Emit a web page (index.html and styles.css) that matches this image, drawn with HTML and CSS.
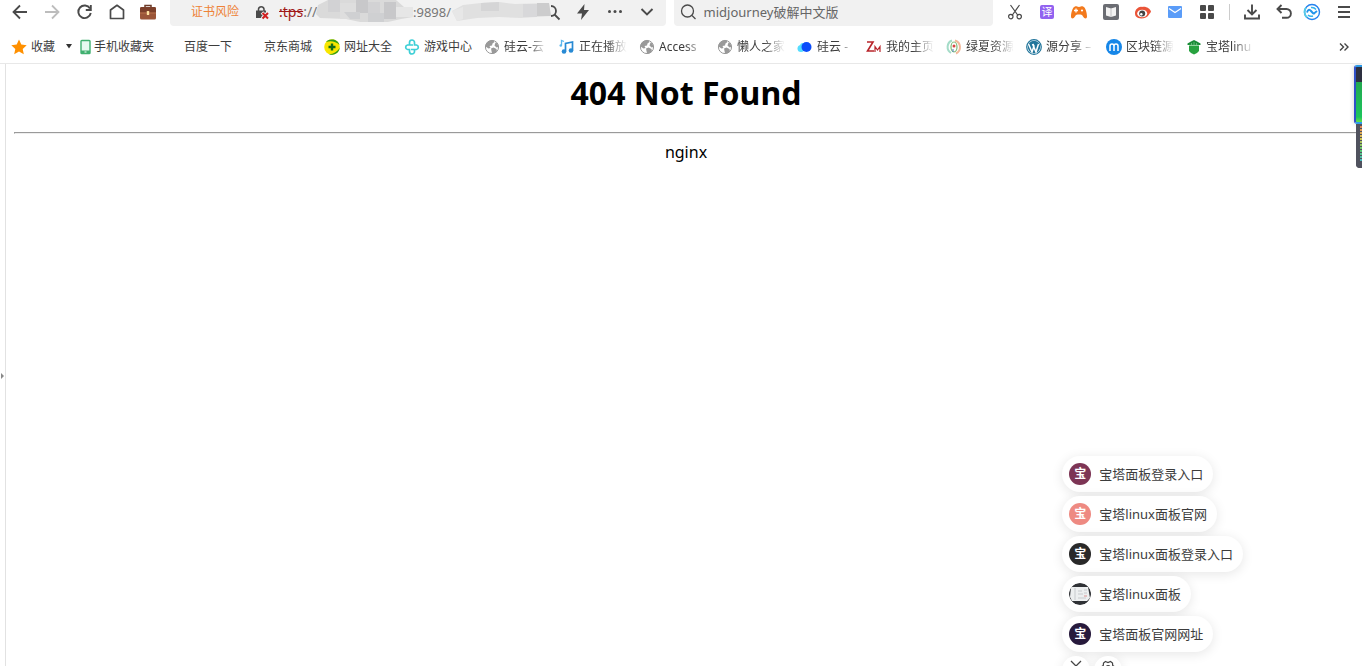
FILE: index.html
```
<!DOCTYPE html>
<html lang="zh-CN">
<head>
<meta charset="utf-8">
<title>404 Not Found</title>
<link rel="stylesheet" href="styles.css">
</head>
<body>
<svg class="defs" width="0" height="0" aria-hidden="true">
  <symbol id="globe" viewBox="0 0 16 16">
    <circle cx="8" cy="8" r="6.600" fill="#fff" stroke="#999" stroke-width="1"/>
    <path d="M3 3.500C5 1.600 8 1 9.500 1.500L10.500 3 8.500 4.500 8 6.500 5.500 7 6.500 9 4.500 9.500 1.500 7.500C1.600 6 2 4.500 3 3.500Z" fill="#999"/>
    <path d="M7 9.500L9.500 8.500 12.500 10 13 12.500C11.500 14 9.500 14.700 8 14.500L7.500 12Z" fill="#999"/>
    <path d="M11.500 3.500L13.500 4.500 14.500 8 12.500 8.500 10.500 6.500Z" fill="#999"/>
  </symbol>
</svg>

<header class="chrome">
  <div class="toolbar">
    <nav class="nav" aria-label="导航">
      <button class="tool" aria-label="后退"><svg width="18" height="18" viewBox="0 0 18 18" fill="none" stroke="#4a4a4a" stroke-width="1.800"><path d="M16 9H3M9 2.500L2.500 9 9 15.500"/></svg></button>
      <button class="tool" aria-label="前进"><svg width="18" height="18" viewBox="0 0 18 18" fill="none" stroke="#bdbdbd" stroke-width="1.800"><path d="M2 9H15M9 2.500L15.500 9 9 15.500"/></svg></button>
      <button class="tool" aria-label="刷新"><svg width="18" height="18" viewBox="0 0 18 18" fill="none" stroke="#4a4a4a" stroke-width="1.900"><path d="M15 5.500A6.300 6.300 0 1 0 15.800 10"/><path d="M15.800 2V7H10.800"/></svg></button>
      <button class="tool" aria-label="主页"><svg width="18" height="18" viewBox="0 0 18 18" fill="none" stroke="#4a4a4a" stroke-width="1.700" stroke-linejoin="round"><path d="M3.500 15.500V7L10 2.300 16.500 7V15.500Z"/></svg></button>
      <button class="tool" aria-label="工具箱"><svg width="18" height="18" viewBox="0 0 18 18"><path d="M6 4.500V2.500H12V4.500" fill="none" stroke="#6d3b28" stroke-width="1.500"/><rect x="1" y="4" width="16" height="12.500" rx="1.500" fill="#9b5538"/><path d="M1 5.500Q1 4 2.500 4H15.500Q17 4 17 5.500V9.500H1Z" fill="#7c3f2a"/><path d="M1 10H17" stroke="#c07a50" stroke-width=".8"/><rect x="7.800" y="8" width="2.400" height="4" rx=".6" fill="#ffe2a0"/></svg></button>
    </nav>

    <div class="address">
      <span class="risk">证书风险</span>
      <svg width="16" height="16" viewBox="0 0 16 16"><path d="M4.500 7V5A2.800 2.800 0 0 1 10 5V7" fill="none" stroke="#4a4a4a" stroke-width="1.500"/><path d="M2 6.500H12V14H2Z" fill="#4a4a4a"/><path d="M8 8.500L14 14.500M14 8.500L8 14.500" stroke="#f1f1f1" stroke-width="3.500"/><path d="M8.500 9L14 14.500M14 9L8.500 14.500" stroke="#d02020" stroke-width="2"/></svg>
      <span class="url"><s>:tps</s>://</span>
      <svg class="mosaic" width="97" height="26" viewBox="0 0 97 26"><path d="M2 6L12 1H80L88 8 97 10V18L85 20 72 23H44L30 20 4 19 0 15Z" fill="#dadada"/><path d="M12 1H24V13H12ZM52 3H64V14H52Z" fill="#d2d2d4"/><path d="M40 1H52V14H40ZM68 3H80V20H68Z" fill="#c8c8ca"/><path d="M24 4H40V20H24Z" fill="#dedede"/><path d="M28 13H44V20H34ZM52 14H68V23H52Z" fill="#cfd0d2"/><path d="M80 8H97V18H80Z" fill="#e6e6e6"/></svg>
      <span class="url port">:9898/</span>
      <svg class="mosaic" width="100" height="26" viewBox="0 0 100 26"><path d="M1 12L12 6 30 4 48 3 64 5 98 4 100 17 70 19 48 18 26 19 6 22Z" fill="#e0e0e0"/><path d="M30 4L48 3V12H30Z" fill="#d5d5d6"/><path d="M72 5H86V18H72Z" fill="#d8d8da"/><path d="M86 4H98L100 17H86Z" fill="#cccccd"/><path d="M1 12L12 8V20L6 22Z" fill="#e7e7e7"/></svg>
      <button class="zoom" aria-label="查找"><svg width="10" height="18" viewBox="8 0 10 18" fill="none" stroke="#4a4a4a" stroke-width="1.800"><circle cx="8" cy="8" r="5"/><path d="M11.500 11.500L16.500 16.500"/></svg></button>
      <button class="tool" aria-label="极速模式"><svg width="16" height="18" viewBox="0 0 16 18"><path d="M9.500 1L2 10.500H7L6 17 14 7H9Z" fill="#4a4a4a"/></svg></button>
      <button class="tool" aria-label="更多"><svg width="16" height="16" viewBox="0 0 16 16" fill="#4a4a4a"><circle cx="2.500" cy="7.500" r="1.500"/><circle cx="8" cy="7.500" r="1.500"/><circle cx="13.500" cy="7.500" r="1.500"/></svg></button>
      <button class="tool" aria-label="展开"><svg width="16" height="16" viewBox="0 0 16 16" fill="none" stroke="#4a4a4a" stroke-width="1.900"><path d="M2.500 5L8 10.500 13.500 5"/></svg></button>
    </div>

    <label class="search">
      <svg width="18" height="18" viewBox="0 0 18 18" fill="none" stroke="#4a4a4a" stroke-width="1.300"><circle cx="8.500" cy="8" r="6"/><path d="M13 12.500L16.500 16"/></svg>
      <input type="text" value="midjourney破解中文版" aria-label="搜索">
    </label>

    <div class="extras">
      <button class="tool" aria-label="截图"><svg width="16" height="16" viewBox="0 0 16 16" fill="none" stroke="#4a4a4a" stroke-width="1.200"><path d="M3.500 1L11 11.500M12.500 1L5 11.500"/><circle cx="3.800" cy="12.600" r="2.200"/><circle cx="12.200" cy="12.600" r="2.200"/></svg></button>
      <button class="tool" aria-label="翻译"><span class="translate">译</span></button>
      <button class="tool" aria-label="游戏"><svg width="18" height="16" viewBox="0 0 18 16"><path d="M5 2.500C6.500 2 7 3 9 3S11.500 2 13 2.500C15.500 3 17 9 17 12.500 17 15 14.500 15 13 12.500 12 10.500 11 10.500 9 10.500S6 10.500 5 12.500C3.500 15 1 15 1 12.500 1 9 2.500 3 5 2.500Z" fill="#f37a1d"/><path d="M4 6.500H8M6 4.500V8.500" stroke="#fff" stroke-width="1.300"/><circle cx="12" cy="6.500" r="1.100" fill="#fff"/></svg></button>
      <button class="tool" aria-label="阅读"><svg width="16" height="16" viewBox="0 0 16 16"><rect width="16" height="16" rx="2" fill="#6b6d73"/><path d="M3 3L8 4.500 13 3V11.500L8 13 3 11.500Z" fill="#f3f3f3"/><path d="M8 4.500V13" stroke="#b5b6b9" stroke-width=".8"/></svg></button>
      <button class="tool" aria-label="微博"><svg width="18" height="16" viewBox="0 0 18 16"><path d="M1 9C1 5.500 5 2 8 3 12 2 16 4.500 17 7.500 16.500 9 15.500 9.500 15 10.500 13 15 4.500 15.500 2 12.500 1.200 11.500 1 10 1 9Z" fill="#ea5438"/><ellipse cx="8.200" cy="9.500" rx="5" ry="3.800" fill="#fff"/><circle cx="8.200" cy="9.600" r="3" fill="#444"/><circle cx="7.300" cy="10.300" r="1.200" fill="#fff"/></svg></button>
      <button class="tool" aria-label="邮件"><svg width="16" height="14" viewBox="0 0 16 14"><rect x="1" y="1" width="14" height="12" rx="1" fill="#5a9cf8"/><path d="M2 3.500L8 7.500 14 3.500" fill="none" stroke="#fff" stroke-width="1.200"/></svg></button>
      <button class="tool" aria-label="应用"><svg width="16" height="16" viewBox="0 0 16 16" fill="#4a4a4a"><rect x="1" y="1" width="6" height="6" rx="1"/><rect x="9" y="1" width="6" height="6" rx="1"/><rect x="1" y="9" width="6" height="6" rx="1"/><rect x="9" y="9" width="6" height="6" rx="1"/></svg></button>
      <span class="divider"></span>
      <button class="tool" aria-label="下载"><svg width="18" height="18" viewBox="0 0 18 18" fill="none" stroke="#4a4a4a" stroke-width="1.900"><path d="M9 1.500V11M4.500 7L9 11.500 13.500 7M2 11.500V15.500H16V11.500"/></svg></button>
      <button class="tool" aria-label="恢复"><svg width="18" height="18" viewBox="0 0 18 18" fill="none" stroke="#4a4a4a" stroke-width="1.900"><path d="M3 6H11.500A4.300 4.300 0 0 1 11.500 14.800H7M6.500 2L2.500 6 6.500 10"/></svg></button>
      <button class="tool avatar" aria-label="账号"><svg width="18" height="18" viewBox="0 0 18 18" fill="none"><circle cx="9" cy="9" r="7.500" stroke="#2582ee" stroke-width="1.400"/><path d="M4 14.500A7.500 7.500 0 0 1 3 4.500" stroke="#55cbe8" stroke-width="1.800"/><path d="M4 9.500Q5.500 5 8 8T11 10.500 14 8" stroke="#2494ea" stroke-width="2"/><path d="M8 4.500Q11 4 13 6.500M5 12Q7 14 10 13" stroke="#31b3ed" stroke-width="1.500"/></svg></button>
      <button class="tool" aria-label="菜单"><svg width="16" height="16" viewBox="0 0 16 16" stroke="#4a4a4a" stroke-width="1.800"><path d="M2 3H14M2 8H14M2 13H14"/></svg></button>
    </div>
  </div>

  <nav class="bookmarks" aria-label="书签">
    <a class="mark" href="#"><svg width="16" height="16" viewBox="0 0 16 16"><path d="M8 .5L10.300 5.600 15.700 6.200 11.700 9.900 12.800 15.300 8 12.600 3.200 15.300 4.300 9.900 .3 6.200 5.700 5.600Z" fill="#ff9000"/></svg><span>收藏</span></a>
    <button class="caret" aria-label="收藏菜单"><svg width="8" height="5" viewBox="0 0 8 5"><path d="M1 0H7L4 4.500Z" fill="#333"/></svg></button>
    <a class="mark phone" href="#"><svg width="11" height="16" viewBox="0 0 11 16"><rect x="1" y="1.500" width="9" height="13" rx=".8" fill="#e7faf0" stroke="#40b070" stroke-width="1.400"/><path d="M1 11.500H10V14.500H1Z" fill="#40b070"/><path d="M4.500 13H6.500" stroke="#fff"/></svg><span>手机收藏夹</span></a>
    <a class="mark" href="#"><i class="blank"></i><span>百度一下</span></a>
    <a class="mark" href="#"><i class="blank"></i><span>京东商城</span></a>
    <a class="mark" href="#"><svg width="16" height="16" viewBox="0 0 16 16"><circle cx="8" cy="8" r="7.800" fill="#f8e600"/><path d="M2 3A8 8 0 0 1 15.500 6C12 2.500 7 1.500 2 3ZM15.800 8.500A8 8 0 0 1 5 15.300C10 15 13.500 12.500 15.800 8.500Z" fill="#2c9b1c"/><path d="M8 4.500V11.500M4.500 8H11.500" stroke="#136b18" stroke-width="2.400"/></svg><span>网址大全</span></a>
    <a class="mark" href="#"><svg width="16" height="16" viewBox="0 0 16 16" fill="none" stroke="#3dcfd6" stroke-width="1.700"><path d="M5.500 6V3.500A2.500 2.500 0 0 1 10.500 3.500V6H12.500A2.300 2.300 0 0 1 12.500 10.500H7M10.500 10V12.500A2.500 2.500 0 0 1 5.500 12.500V10.500H3.500A2.300 2.300 0 0 1 3.500 6H9"/></svg><span>游戏中心</span></a>
    <a class="mark w43" href="#"><svg width="16" height="16"><use href="#globe"/></svg><span class="fade">硅云-云</span></a>
    <a class="mark" href="#"><svg width="16" height="16" viewBox="0 0 16 16"><path d="M6.500 12.500V4.500L13.500 3V11.500" fill="none" stroke="#288ad4" stroke-width="1.700"/><circle cx="5" cy="12.500" r="2.300" fill="#288ad4"/><circle cx="12" cy="11.500" r="2.300" fill="#288ad4"/><path d="M2.500 6V1.500L5 2.500" fill="none" stroke="#5bb6ed" stroke-width="1.300"/><circle cx="1.800" cy="6.500" r="1.300" fill="#5bb6ed"/></svg><span class="fade">正在播放</span></a>
    <a class="mark w46" href="#"><svg width="16" height="16"><use href="#globe"/></svg><span class="fade">Access</span></a>
    <a class="mark" href="#"><svg width="16" height="16"><use href="#globe"/></svg><span class="fade">懒人之家</span></a>
    <a class="mark w37" href="#"><svg width="16" height="16" viewBox="0 0 16 16"><circle cx="4" cy="9.500" r="3.500" fill="#55ddff"/><circle cx="6" cy="7" r="3" fill="#55ddff"/><circle cx="9.500" cy="8" r="5" fill="#0b4dfa"/></svg><span class="fade">硅云 -</span></a>
    <a class="mark" href="#"><svg width="16" height="16" viewBox="0 0 16 16" fill="none" stroke="#b8242a"><path d="M1 3H7L1.500 12H8" stroke-width="1.600"/><path d="M9 13V7.500L11.500 11 14 7.500V13" stroke-width="1.200"/></svg><span class="fade">我的主页</span></a>
    <a class="mark" href="#"><svg width="16" height="16" viewBox="0 0 16 16" fill="none"><path d="M6 1.500A7 7 0 0 0 5 14" stroke="#a5dcc8" stroke-width="2"/><path d="M9 1.500A7 7 0 0 1 10 14.500" stroke="#f2b99b" stroke-width="2"/><ellipse cx="8" cy="8" rx="3" ry="5" stroke="#7fbc78" stroke-width="1.200"/><circle cx="8" cy="7" r="1.500" fill="#d84840"/><path d="M7 10V13" stroke="#5078b8"/></svg><span class="fade">绿夏资源</span></a>
    <a class="mark" href="#"><svg width="16" height="16" viewBox="0 0 16 16" fill="none"><circle cx="8" cy="8" r="7.300" fill="#fff" stroke="#21759b" stroke-width="1.200"/><circle cx="8" cy="8" r="6.200" fill="#21759b"/><path d="M2.500 5L6 13 8 7 7 5M6.500 5L10 13 12.500 5" stroke="#fff" stroke-width="1.500"/></svg><span class="fade">源分享 –</span></a>
    <a class="mark" href="#"><svg width="16" height="16" viewBox="0 0 16 16" fill="none"><circle cx="8" cy="8" r="8" fill="#1686e8"/><path d="M4 12V7Q4 5 6 5T8 7V12M8 7Q8 5 10 5T12 7V12" stroke="#fff" stroke-width="1.500"/></svg><span class="fade">区块链源</span></a>
    <a class="mark" href="#"><svg width="16" height="16" viewBox="0 0 16 16"><path d="M1.500 4.500L5 2.500 8 1 11 2.500 14.500 4.500V6H1.500Z" fill="#198b37"/><path d="M3 6.500H13V12Q11.500 14 8 15.500 4.500 14 3 12Z" fill="#27a23f"/><path d="M3 6.300H13M5.500 4V6M8 3V6M10.500 4V6" stroke="#8ed89c" stroke-width=".6"/></svg><span class="fade">宝塔linu</span></a>
    <button class="tool more" aria-label="更多书签"><svg width="10" height="10" viewBox="0 0 10 10" fill="none" stroke="#444" stroke-width="1.400"><path d="M1 1.500L4.500 5 1 8.500M5.500 1.500L9 5 5.500 8.500"/></svg></button>
  </nav>
</header>

<div class="view">
  <aside class="rail"><button class="expand" aria-label="展开侧栏"><svg width="5" height="6" viewBox="0 0 5 6"><path d="M1 0L4 3 1 6Z" fill="#888"/></svg></button></aside>
  <main class="page">
    <h1>404 Not Found</h1>
    <hr>
    <p>nginx</p>
  </main>

  <div class="gauge"><div class="level"></div><div class="bars"></div></div>

  <aside class="suggest">
    <a class="pill" href="#"><b class="badge plum">宝</b>宝塔面板登录入口</a>
    <a class="pill" href="#"><b class="badge coral">宝</b>宝塔linux面板官网</a>
    <a class="pill" href="#"><b class="badge black">宝</b>宝塔linux面板登录入口</a>
    <a class="pill" href="#"><svg class="badge" width="22" height="22" viewBox="0 0 22 22"><circle cx="11" cy="11" r="11" fill="#303236"/><path d="M2 4H19L21 15 18 18H3L1 14Z" fill="#edeff0"/><path d="M6 5V17M9 8H13M9 11H14M15 7H18M15 10H18M9 15H17" stroke="#c7cacd"/><path d="M15 13H18" stroke="#db9292"/></svg>宝塔linux面板</a>
    <a class="pill" href="#"><b class="badge night">宝</b>宝塔面板官网网址</a>
    <div class="actions">
      <button class="round" aria-label="关闭"><svg width="14" height="14" viewBox="0 0 14 14" fill="none" stroke="#444" stroke-width="1.300"><path d="M2 1L12 11M12 1L2 11"/></svg></button>
      <button class="round" aria-label="设置"><svg width="16" height="16" viewBox="0 0 16 16" fill="none" stroke="#444" stroke-width="1.200"><path d="M5.500 1.500L8 2.500 10.500 1.500 12.500 3 12.700 5.500 15 7 14.500 9.500 12.500 11 12 13.500 9.500 14.500 8 13 6.500 14.500 4 13.500 3.500 11 1.500 9.500 1 7 3.300 5.500 3.500 3Z"/><circle cx="8" cy="8" r="2.300"/></svg></button>
    </div>
  </aside>
</div>
</body>
</html>
```
FILE: styles.css
```
* { box-sizing: border-box; }

body {
  margin: 0;
  height: 100vh;
  display: flex;
  flex-direction: column;
  overflow: hidden;
  background: #fff;
  color: #3c3c3c;
  font: 12px/16px "Noto Sans", "Noto Sans CJK SC", sans-serif;
}

svg { display: block; flex: none; }
.defs { position: absolute; }
a { color: inherit; text-decoration: none; }
button { padding: 0; border: 0; background: none; font: inherit; color: inherit; }

.chrome { flex: none; border-bottom: 1px solid #e8e8e8; }

.toolbar { display: flex; height: 26px; padding: 0 2px 0 4px; }
.nav, .extras { display: flex; align-items: center; height: 24px; flex: none; }
.nav { margin-right: 6px; }
.extras { margin-left: 6px; }
.tool { display: flex; flex: none; align-items: center; justify-content: center; width: 32px; height: 24px; }
.avatar { width: 24px; margin-right: 4px; }
.divider { width: 1px; height: 16px; margin: 0 6px; background: #ccc; }
.translate { width: 14px; height: 14px; border-radius: 2px; background: #9262f0; color: #fff; font-size: 11px; line-height: 14px; }

.address, .search {
  display: flex;
  align-items: center;
  min-width: 0;
  height: 26px;
  padding-bottom: 2px;
  border-radius: 0 0 4px 4px;
  background: #f1f1f1;
}
.address { flex: 3 1 0; padding-left: 21px; padding-right: 3px; }
.risk { margin-right: 15px; color: #ee8236; white-space: nowrap; }
.url { margin-left: 9px; width: 37px; color: #777; font-size: 14px; line-height: 20px; white-space: nowrap; }
.url s { color: #a01818; }
.port { margin-left: 0; width: 38px; font-size: 13px; }
.mosaic { height: 26px; }
.zoom { width: 15px; margin-right: auto; }

.search { flex: 2 1 0; gap: 7px; margin-left: 8px; padding-left: 5px; }
.search input {
  flex: 1;
  min-width: 0;
  padding: 0;
  border: 0;
  outline: 0;
  background: none;
  color: #666;
  font: inherit;
  font-size: 13px;
}

.bookmarks { display: flex; align-items: center; gap: 12px; height: 37px; padding: 4px 2px 0 11px; }
.mark { display: flex; flex: none; align-items: center; gap: 4px; white-space: nowrap; }
.caret { margin: 0 -5px 0 -2px; }
.phone { gap: 3px; margin-right: -2px; }
.blank { width: 16px; height: 16px; }
.fade {
  width: 48px;
  overflow: hidden;
  -webkit-mask-image: linear-gradient(to right, #000 55%, transparent);
  mask-image: linear-gradient(to right, #000 55%, transparent);
}
.w43 .fade { width: 43px; }
.w46 .fade { width: 46px; }
.w37 .fade { width: 37px; }
.more { margin-left: auto; }

.view { position: relative; display: flex; flex: 1; min-height: 0; overflow: hidden; }
.rail { display: flex; align-items: center; width: 6px; border-right: 1px solid #e2e2e2; }
.expand { margin-top: 22px; }

.page { flex: 1; padding: 7px 4px 8px 8px; color: #000; font-size: 16px; line-height: 22px; text-align: center; font-family: "Noto Sans", sans-serif; }
.page h1 { margin: 0 0 18px; font-size: 32px; line-height: 43px; }
.page hr { margin: 0 0 7px; }
.page p { margin: 0; }

.gauge { position: absolute; top: 1px; right: 0; width: 8px; }
.level {
  height: 59px;
  border: 2px solid #2f50c8;
  border-top-color: #2c9be8;
  border-bottom-color: #2c9be8;
  border-right: 0;
  border-radius: 3px 0 0 3px;
  background: linear-gradient(#2d3040 0 15px, #22a850 15px, #1cc45c 50px, #62e04c);
  box-shadow: 0 0 5px rgba(0, 0, 0, .2);
}
.bars {
  height: 44px;
  margin-left: 2px;
  border: solid #50525e;
  border-width: 2px 0 6px 4px;
  border-radius: 0 0 0 4px;
  background:
    repeating-linear-gradient(transparent 0 2px, #50525e 2px 3px),
    linear-gradient(#e08055, #d8c452, #58c870, #48b8c8);
}

.suggest {
  position: absolute;
  right: 119px;
  bottom: -18px;
  display: flex;
  flex-direction: column;
  align-items: flex-start;
  gap: 4px;
}
.pill {
  display: flex;
  align-items: center;
  gap: 8px;
  height: 36px;
  padding: 0 10px 0 7px;
  border-radius: 18px;
  background: #fff;
  box-shadow: 0 2px 12px rgba(0, 0, 0, .1);
  font-size: 13px;
  white-space: nowrap;
}
.badge { width: 22px; height: 22px; border-radius: 50%; color: #fff; font-size: 12px; line-height: 21px; text-align: center; }
.plum { background: #7d3555; }
.coral { background: #ee8a82; }
.black { background: #292929; }
.night { background: #271a3c; }
.actions { display: flex; gap: 4px; }
.round { display: flex; justify-content: center; width: 28px; height: 28px; padding-top: 4px; border-radius: 50%; background: #fff; box-shadow: 0 2px 12px rgba(0, 0, 0, .1); }
```
